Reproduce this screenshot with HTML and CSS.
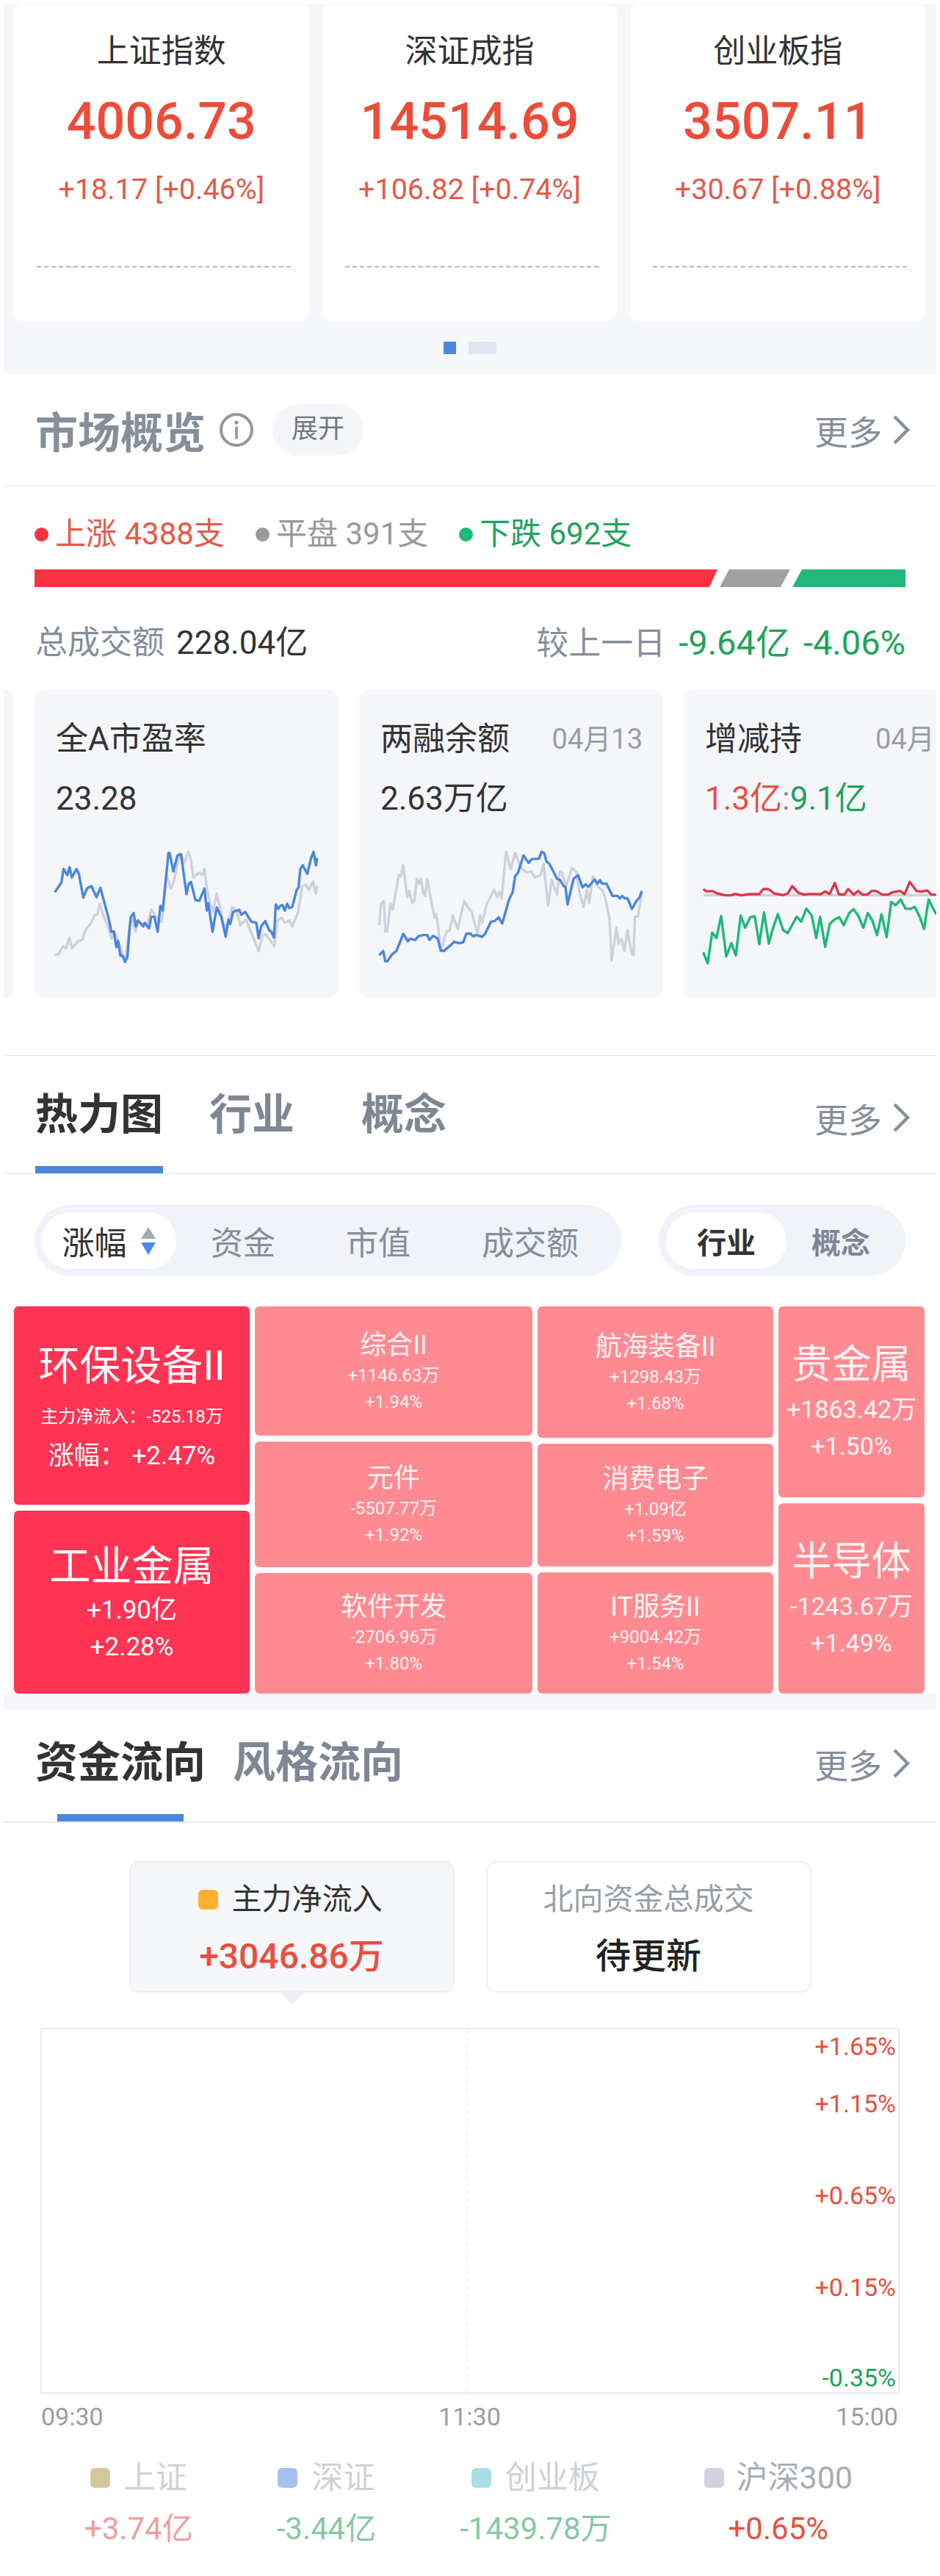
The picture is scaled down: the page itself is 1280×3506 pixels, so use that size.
FILE: index.html
```html
<!DOCTYPE html>
<html lang="zh">
  <head>
    <meta charset="utf-8">
    <title>行情</title>
    <link rel="stylesheet" href="styles.css">
  </head>
  <body>
    <!-- index cards -->
    <section class="indexes">
      <div class="index-row">
        <div class="index-card">
          <div class="index-name">上证指数</div>
          <div class="index-price">4006.73</div>
          <div class="index-change">+18.17 [+0.46%]</div>
          <div class="index-dash"></div>
        </div>
        <div class="index-card">
          <div class="index-name">深证成指</div>
          <div class="index-price">14514.69</div>
          <div class="index-change">+106.82 [+0.74%]</div>
          <div class="index-dash"></div>
        </div>
        <div class="index-card">
          <div class="index-name">创业板指</div>
          <div class="index-price">3507.11</div>
          <div class="index-change">+30.67 [+0.88%]</div>
          <div class="index-dash"></div>
        </div>
      </div>
      <div class="pager">
        <span class="pager-on"></span>
        <span class="pager-off"></span>
      </div>
    </section>

    <!-- market overview -->
    <section class="market">
      <div class="market-head">
        <div class="head-title">市场概览</div>
        <svg class="info-icon" width="46" height="46" viewBox="0 0 46 46">
          <circle cx="23" cy="23" r="21" fill="none" stroke="#92969f" stroke-width="4"/>
          <circle cx="23" cy="13" r="2.6" fill="#92969f"/>
          <path d="M23 20v14" stroke="#92969f" stroke-width="3.6" stroke-linecap="round"/>
        </svg>
        <div class="expand-pill">展开</div>
        <div class="more">更多
          <svg width="24" height="40" viewBox="0 0 24 40"><path d="M3 2l18 18L3 38" fill="none" stroke="#868e9b" stroke-width="4.4"/></svg>
        </div>
      </div>

      <div class="status-row">
        <span class="status up"><i></i>上涨 4388支</span>
        <span class="status flat"><i></i>平盘 391支</span>
        <span class="status down"><i></i>下跌 692支</span>
      </div>
      <div class="ratio-bar">
        <div class="ratio-up"></div>
        <div class="ratio-flat"></div>
        <div class="ratio-down"></div>
      </div>
      <div class="turnover">
        <div><span class="muted">总成交额</span> <span class="dark turn-total">228.04亿</span></div>
        <div class="turn-right"><span class="muted">较上一日</span><span class="green turn-num">-9.64亿</span><span class="green turn-num">-4.06%</span></div>
      </div>

      <div class="mini-row">
        <div class="mini-stub"></div>
        <div class="mini-card">
          <div class="mini-top"><span>全A市盈率</span></div>
          <div class="mini-value">23.28</div>
          <svg class="mini-chart" width="370" height="170" viewBox="171.5 60 906.5 510" preserveAspectRatio="none">
            <polyline class="line-grey" points="183,505 195,505 210,470 220,480 232,435 240,480 260,450 275,445 285,405 305,375 315,345 325,340 333,295 345,345 360,390 372,440 380,410 395,450 410,510 418,530 430,410 437,350 453,410 460,370 490,385 505,320 520,350 540,370 555,180 570,235 580,205 600,90 615,130 628,85 637,120 645,190 665,170 675,180 682,155 690,235 700,290 710,330 723,255 735,320 750,400 762,370 775,310 790,330 802,385 820,360 840,420 863,490 875,430 885,420 900,445 915,470 925,365 940,355 950,375 965,365 975,390 995,330 1008,225 1020,220 1030,240 1045,207 1053,255 1058,225"/>
            <polyline class="line-blue" points="183,250 205,210 212,155 225,180 232,148 240,190 255,155 263,175 278,272 290,235 305,225 322,270 335,232 362,355 372,412 380,410 388,475 394,450 402,510 410,510 417,535 425,515 433,390 437,350 446,335 453,390 460,365 478,390 483,375 497,398 505,350 515,350 526,412 535,305 543,325 562,90 566,90 578,165 592,100 604,95 622,258 630,215 637,208 652,282 665,285 682,235 690,325 695,295 709,412 723,312 738,350 753,432 762,362 768,380 778,330 798,322 805,342 818,330 838,370 855,375 863,438 871,390 885,368 898,405 905,410 914,435 920,300 928,318 936,305 943,303 950,325 958,297 965,315 975,310 990,240 996,230 1002,155 1010,140 1025,175 1038,110 1046,85 1054,140 1058,110"/>
          </svg>
        </div>
        <div class="mini-card">
          <div class="mini-top"><span>两融余额</span><span class="mini-date">04月13</span></div>
          <div class="mini-value">2.63万亿</div>
          <svg class="mini-chart" width="370" height="170" viewBox="1254 60 906.5 510" preserveAspectRatio="none">
            <polyline class="line-grey" points="1265,385 1270,300 1280,285 1285,410 1292,410 1302,295 1310,320 1330,180 1337,185 1345,140 1358,270 1365,245 1375,295 1382,285 1390,195 1398,215 1404,195 1412,255 1418,265 1425,195 1440,300 1450,355 1455,340 1462,400 1470,490 1485,425 1490,410 1500,405 1510,345 1527,400 1548,285 1560,310 1573,330 1583,380 1593,415 1601,345 1608,375 1623,300 1648,240 1658,270 1665,250 1673,275 1688,85 1703,155 1718,90 1738,150 1758,170 1773,165 1783,190 1803,180 1813,135 1828,305 1840,200 1858,260 1866,170 1873,165 1888,225 1908,150 1923,170 1933,250 1946,310 1958,240 1965,295 1978,185 1993,225 2008,240 2018,270 2033,355 2040,530 2056,395 2063,460 2073,440 2083,490 2093,405 2108,505 2113,505 2118,350 2128,350 2141,250"/>
            <polyline class="line-blue" points="1265,507 1278,490 1285,532 1292,532 1308,503 1322,490 1345,420 1360,450 1368,440 1385,445 1395,430 1410,425 1425,425 1432,445 1445,428 1460,440 1470,488 1480,490 1500,470 1515,452 1530,458 1545,455 1555,420 1568,418 1578,430 1588,425 1608,432 1618,420 1638,370 1650,368 1663,352 1675,378 1698,280 1710,250 1718,185 1728,170 1746,100 1763,130 1773,115 1798,113 1806,85 1815,90 1823,125 1833,135 1858,195 1868,200 1880,225 1886,228 1893,300 1913,195 1928,180 1943,230 1953,218 1963,228 1983,198 1993,215 2001,200 2008,215 2023,215 2043,265 2060,265 2068,275 2076,265 2083,275 2093,275 2108,318 2123,285 2133,272 2141,245"/>
          </svg>
        </div>
        <div class="mini-card">
          <div class="mini-top"><span>增减持</span><span class="mini-date mini-date-cut">04月</span></div>
          <div class="mini-value"><span class="red">1.3亿</span><span class="muted">:</span><span class="green">9.1亿</span></div>
          <svg class="mini-chart" width="370" height="170" viewBox="769.3 60 906.5 510" preserveAspectRatio="none">
            <line class="line-grey" x1="778" y1="262" x2="1555" y2="262"/>
            <polyline class="line-red" points="778,238 790,247 808,245 825,255 850,262 870,263 885,257 905,263 930,258 965,258 978,237 995,237 1015,255 1045,262 1060,255 1075,225 1095,252 1115,260 1135,257 1170,258 1185,247 1200,257 1217,212 1230,258 1248,260 1262,237 1280,260 1295,245 1310,260 1325,260 1340,245 1355,245 1375,260 1395,260 1410,250 1435,245 1450,258 1467,208 1490,245 1505,248 1525,243 1540,260 1555,260"/>
            <polyline class="line-green" points="778,495 793,540 808,415 822,437 838,347 855,512 872,458 887,508 903,345 918,395 935,352 950,348 965,462 981,332 997,460 1010,400 1027,340 1045,405 1060,417 1090,350 1105,370 1122,317 1140,345 1155,437 1168,350 1185,473 1200,380 1215,362 1232,352 1247,385 1265,335 1280,320 1295,345 1312,395 1327,335 1342,365 1358,425 1373,340 1390,433 1405,290 1420,303 1437,280 1453,317 1470,318 1484,310 1500,350 1515,400 1530,280 1555,340"/>
          </svg>
        </div>
      </div>
    </section>

    <!-- heat map -->
    <section class="heat">
      <div class="heat-head">
        <div class="tab tab-on">热力图</div>
        <div class="tab tab-a">行业</div>
        <div class="tab tab-b">概念</div>
        <div class="more heat-more">更多
          <svg width="24" height="40" viewBox="0 0 24 40"><path d="M3 2l18 18L3 38" fill="none" stroke="#868e9b" stroke-width="4.4"/></svg>
        </div>
      </div>

      <div class="filter-row">
        <div class="seg seg-left">
          <div class="seg-pill seg-sort">涨幅
            <svg width="22" height="38" viewBox="0 0 22 38">
              <path d="M11 0l10 16H1z" fill="#a6a9b4"/>
              <path d="M1 21h20L11 38z" fill="#4d8af0"/>
            </svg>
          </div>
          <div class="seg-item seg-zj">资金</div>
          <div class="seg-item seg-sz">市值</div>
          <div class="seg-item seg-cj">成交额</div>
        </div>
        <div class="seg seg-right">
          <div class="seg-pill seg-bold">行业</div>
          <div class="seg-other">概念</div>
        </div>
      </div>

      <div class="treemap">
        <div class="tree-col col-a">
          <div class="tile deep tile-a1">
            <div class="t-big">环保设备II</div>
            <div class="t-sub">主力净流入：-525.18万</div>
            <div class="t-line">涨幅： +2.47%</div>
          </div>
          <div class="tile deep tile-a2">
            <div class="t-big">工业金属</div>
            <div class="t-line">+1.90亿</div>
            <div class="t-line">+2.28%</div>
          </div>
        </div>
        <div class="tree-col col-b">
          <div class="tile pale tile-b1">
            <div class="t-mid">综合II</div>
            <div class="t-small">+1146.63万</div>
            <div class="t-small">+1.94%</div>
          </div>
          <div class="tile pale tile-b2">
            <div class="t-mid">元件</div>
            <div class="t-small">-5507.77万</div>
            <div class="t-small">+1.92%</div>
          </div>
          <div class="tile pale tile-b3">
            <div class="t-mid">软件开发</div>
            <div class="t-small">-2706.96万</div>
            <div class="t-small">+1.80%</div>
          </div>
        </div>
        <div class="tree-col col-c">
          <div class="tile pale tile-c1">
            <div class="t-mid">航海装备II</div>
            <div class="t-small">+1298.43万</div>
            <div class="t-small">+1.68%</div>
          </div>
          <div class="tile pale tile-c2">
            <div class="t-mid">消费电子</div>
            <div class="t-small">+1.09亿</div>
            <div class="t-small">+1.59%</div>
          </div>
          <div class="tile pale tile-c3">
            <div class="t-mid">IT服务II</div>
            <div class="t-small">+9004.42万</div>
            <div class="t-small">+1.54%</div>
          </div>
        </div>
        <div class="tree-col col-d">
          <div class="tile pale tile-d1">
            <div class="t-big">贵金属</div>
            <div class="t-line">+1863.42万</div>
            <div class="t-line">+1.50%</div>
          </div>
          <div class="tile pale tile-d2">
            <div class="t-big">半导体</div>
            <div class="t-line">-1243.67万</div>
            <div class="t-line">+1.49%</div>
          </div>
        </div>
      </div>
      <div class="heat-foot"></div>
    </section>

    <!-- money flow -->
    <section class="flow">
      <div class="flow-head">
        <div class="flow-tabs">
          <div class="flow-tab flow-on">资金流向</div>
          <div class="flow-tab">风格流向</div>
          <div class="more flow-more">更多
            <svg width="24" height="40" viewBox="0 0 24 40"><path d="M3 2l18 18L3 38" fill="none" stroke="#868e9b" stroke-width="4.4"/></svg>
          </div>
        </div>
        <div class="flow-line"></div>
      </div>

      <div class="flow-boxes">
        <div class="flow-box box-on">
          <div class="box-label"><i class="sq sq-orange"></i>主力净流入</div>
          <div class="box-value red">+3046.86万</div>
        </div>
        <div class="flow-box">
          <div class="box-label box-grey">北向资金总成交</div>
          <div class="box-value box-wait">待更新</div>
        </div>
      </div>

      <div class="flow-chart">
        <div class="mid-line"></div>
        <div class="axis-y red y1">+1.65%</div>
        <div class="axis-y red y2">+1.15%</div>
        <div class="axis-y red y3">+0.65%</div>
        <div class="axis-y red y4">+0.15%</div>
        <div class="axis-y green y5">-0.35%</div>
      </div>
      <div class="axis-x">
        <span>09:30</span>
        <span>11:30</span>
        <span>15:00</span>
      </div>

      <div class="legend">
        <div class="legend-item">
          <div class="legend-name faded"><i class="sq sq-sh"></i>上证</div>
          <div class="legend-val red-soft">+3.74亿</div>
        </div>
        <div class="legend-item">
          <div class="legend-name faded"><i class="sq sq-sz"></i>深证</div>
          <div class="legend-val green-soft">-3.44亿</div>
        </div>
        <div class="legend-item">
          <div class="legend-name faded"><i class="sq sq-cy"></i>创业板</div>
          <div class="legend-val green-soft">-1439.78万</div>
        </div>
        <div class="legend-item legend-last">
          <div class="legend-name"><i class="sq sq-hs"></i>沪深300</div>
          <div class="legend-val red">+0.65%</div>
        </div>
      </div>
    </section>
  </body>
</html>
```

FILE: styles.css
```css
* {
  box-sizing: border-box;
}

body {
  margin: 0;
  width: 1280px;
  background: #fff;
  color: #333;
  font-family: Roboto, "Noto Sans CJK SC", sans-serif;
}

.red { color: #e8503e; }
.green { color: #1fa35a; }
.muted { color: #868e9b; }
.dark { color: #333; }

/* index cards */
.indexes {
  margin: 5px 5px 0;
  height: 505px;
  background: #f5f7fa;
  overflow: hidden;
}

.index-row {
  display: flex;
  gap: 18px;
  padding: 1px 15px 0 14px;
}

.index-card {
  flex: 1;
  height: 431px;
  padding-top: 34px;
  background: #fff;
  border-radius: 12px;
  text-align: center;
}

.index-name {
  font-size: 44px;
  line-height: 60px;
  color: #333;
}

.index-price {
  margin-top: 25px;
  font-size: 70px;
  line-height: 80px;
  font-weight: 500;
  color: #ee4b38;
}

.index-change {
  margin-top: 28px;
  font-size: 39.5px;
  line-height: 50px;
  color: #e2594a;
}

.index-dash {
  margin: 79px 25px 0 31px;
  border-top: 2px dashed #b9b9b9;
}

.pager {
  display: flex;
  justify-content: center;
  gap: 17px;
  margin-top: 28px;
}

.pager span {
  height: 17px;
}

.pager-on {
  width: 17px;
  background: #4a86e4;
}

.pager-off {
  width: 38px;
  background: #e3e6f1;
}

/* market overview */
.market {
  height: 927px;
  border-bottom: 1px solid #dcdee2;
  margin: 0 5px;
}

.market-head {
  display: flex;
  align-items: center;
  height: 152px;
  padding: 0 36px 2px 43px;
  border-bottom: 1px solid #e8eaee;
}

.head-title {
  font-size: 58px;
  font-weight: 700;
  color: #868e9b;
}

.info-icon {
  margin-left: 19px;
}

.expand-pill {
  margin-left: 26px;
  width: 124px;
  height: 70px;
  line-height: 68px;
  border-radius: 35px;
  background: #f5f6fa;
  text-align: center;
  font-size: 36px;
  color: #73777f;
}

.more {
  display: flex;
  align-items: center;
  gap: 14px;
  margin-left: auto;
  font-size: 46px;
  color: #868e9b;
}

.status-row {
  display: flex;
  margin-top: 40px;
  padding-left: 42px;
  font-size: 42px;
  line-height: 50px;
}

.status {
  display: flex;
  align-items: center;
}

.status i {
  width: 19px;
  height: 19px;
  margin-right: 9px;
  border-radius: 50%;
}

.status.up { width: 301px; color: #e2594a; }
.status.up i { background: #f4333f; }
.status.flat { width: 277px; color: #999; }
.status.flat i { background: #999; }
.status.down { color: #1fa35a; }
.status.down i { background: #1fb878; }

.ratio-bar {
  display: flex;
  gap: 3px;
  height: 24px;
  margin: 23px 42px 0;
}

.ratio-up {
  width: 930px;
  background: #f9323f;
  clip-path: polygon(0 0, 100% 0, calc(100% - 11px) 100%, 0 100%);
}

.ratio-flat {
  width: 96px;
  background: #a0a0a0;
  clip-path: polygon(13px 0, 100% 0, calc(100% - 13px) 100%, 0 100%);
}

.ratio-down {
  flex: 1;
  background: #1fb878;
  clip-path: polygon(13px 0, 100% 0, 100% 100%, 0 100%);
}

.turnover {
  display: flex;
  justify-content: space-between;
  margin-top: 46px;
  padding: 0 42px 0 43px;
  font-size: 44px;
  line-height: 60px;
}

.turn-total {
  margin-left: 5px;
}

.turn-num {
  margin-left: 18px;
  font-size: 47px;
}

.mini-row {
  display: flex;
  gap: 28px;
  margin-top: 33px;
  overflow: hidden;
}

.mini-stub {
  flex: none;
  width: 14px;
  background: #f5f6fa;
  border-radius: 0 12px 12px 0;
}

.mini-card {
  flex: none;
  width: 414px;
  height: 419px;
  padding: 37px 0 0 29px;
  background: #f5f6fa;
  border-radius: 14px;
  overflow: hidden;
}

.mini-top {
  display: flex;
  font-size: 44px;
  line-height: 60px;
  color: #333;
}

.mini-date {
  margin-left: auto;
  padding-right: 28px;
  font-size: 38px;
  color: #999da5;
}

.mini-date-cut {
  padding-right: 0;
  margin-left: 100px;
}

.mini-value {
  margin-top: 21px;
  font-size: 44px;
  line-height: 60px;
  color: #333;
}

.mini-chart {
  display: block;
  margin: 34px 0 0 -6px;
}

.mini-chart polyline,
.mini-chart line {
  fill: none;
  stroke-width: 3.4px;
  stroke-linejoin: round;
  vector-effect: non-scaling-stroke;
}

.line-grey { stroke: #d0d0dc; }
.line-blue { stroke: #4a86dc; }
.line-red { stroke: #d9394a; }
.line-green { stroke: #1fb878; }

/* heat map */
.heat-head {
  display: flex;
  height: 161px;
  margin: 0 5px;
  padding: 40px 0 0 43px;
  border-bottom: 2px solid #eceef1;
}

.tab {
  height: 120px;
  font-size: 58px;
  line-height: 80px;
  font-weight: 700;
  color: #7f8794;
}

.tab-on {
  color: #333;
  border-bottom: 10px solid #4a86dc;
}

.tab-a { margin-left: 63px; }
.tab-b { margin-left: 91px; }

.heat-more {
  height: 80px;
  margin-top: 4px;
  margin-right: 36px;
}

.filter-row {
  display: flex;
  justify-content: space-between;
  margin-top: 42px;
  padding: 0 47px;
}

.seg {
  display: flex;
  align-items: center;
  height: 97px;
  padding: 0 10px;
  background: #f0f3f8;
  border-radius: 49px;
}

.seg-left { width: 799px; }
.seg-right { width: 336px; }

.seg-pill {
  display: flex;
  align-items: center;
  justify-content: center;
  height: 77px;
  background: #fff;
  border-radius: 39px;
  color: #333;
}

.seg-sort {
  width: 183px;
  gap: 18px;
  font-size: 44px;
}

.seg-item {
  font-size: 44px;
  color: #868e9b;
}

.seg-zj { margin-left: 47px; }
.seg-sz { margin-left: 96px; }
.seg-cj { margin-left: 97px; }

.seg-bold {
  width: 164px;
  font-size: 40px;
  font-weight: 700;
}

.seg-other {
  margin-left: 34px;
  font-size: 40px;
  font-weight: 700;
  color: #7f8794;
}

.treemap {
  display: flex;
  gap: 7px;
  height: 527px;
  margin-top: 41px;
  padding: 0 20px 0 19px;
}

.tree-col {
  display: flex;
  flex-direction: column;
  gap: 8px;
}

.col-a { width: 321px; }
.col-b { width: 378px; }
.col-c { width: 321px; }
.col-d { width: 199px; }

.tile {
  display: flex;
  flex-direction: column;
  justify-content: center;
  align-items: center;
  border-radius: 6px;
  color: #fff;
  white-space: nowrap;
}

.deep { background: #ff3353; }
.pale { background: #ff8a92; color: #fff3f3; }

.tile-a1 { height: 270px; padding-top: 4px; }
.tile-a2 { height: 249px; padding-top: 2px; }
.tile-b1 { height: 176px; padding-top: 2px; }
.tile-b2 { height: 171px; }
.tile-b3 { height: 164px; }
.tile-c1 { height: 179px; padding-top: 2px; }
.tile-c2 { height: 167px; }
.tile-c3 { height: 165px; }
.tile-d1 { height: 260px; }
.tile-d2 { height: 259px; }

.t-big {
  font-size: 56px;
  line-height: 70px;
}

.col-d .t-big {
  font-size: 54px;
}

.t-sub {
  margin-top: 16px;
  font-size: 24px;
  line-height: 36px;
}

.t-line {
  font-size: 35px;
  line-height: 50px;
}

.col-d .t-line {
  font-size: 34px;
}

.t-sub + .t-line {
  margin-top: 11px;
}

.t-mid {
  font-size: 36px;
  line-height: 46px;
}

.t-small {
  font-size: 24px;
  line-height: 36px;
}

.heat-foot {
  height: 22px;
  margin: 0 5px;
  background: #f5f7fa;
}

/* money flow */
.flow-tabs {
  display: flex;
  padding: 32px 0 0 48px;
}

.flow-tab {
  font-size: 58px;
  line-height: 80px;
  font-weight: 700;
  color: #7f8794;
}

.flow-on {
  margin-right: 37px;
  color: #333;
}

.flow-more {
  height: 74px;
  margin-top: 4px;
  margin-right: 41px;
}

.flow-line {
  position: relative;
  height: 12px;
  margin: 30px 5px 0;
  border-bottom: 2px solid #e8eaee;
}

.flow-line::after {
  content: "";
  position: absolute;
  left: 73px;
  top: 0;
  width: 172px;
  height: 10px;
  background: #4a86dc;
}

.flow-boxes {
  display: flex;
  justify-content: center;
  gap: 43px;
  margin-top: 52px;
}

.flow-box {
  position: relative;
  width: 443px;
  height: 179px;
  padding-top: 25px;
  border: 2px solid #eceef2;
  border-radius: 14px;
  text-align: center;
}

.box-on {
  background: #f5f7fa;
}

.box-on::after {
  content: "";
  position: absolute;
  left: 203px;
  bottom: -19px;
  width: 0;
  height: 0;
  border-left: 17px solid transparent;
  border-right: 17px solid transparent;
  border-top: 18px solid #eef0f4;
}

.box-label {
  display: flex;
  justify-content: center;
  align-items: center;
  font-size: 41px;
  line-height: 50px;
  color: #333;
}

.box-on .box-label {
  padding-right: 4px;
}

.box-grey {
  color: #999ea8;
}

.box-value {
  margin-top: 23px;
  font-size: 48px;
  line-height: 60px;
  font-weight: 500;
}

.box-wait {
  color: #222;
}

.sq {
  display: inline-block;
  width: 27px;
  height: 27px;
  margin-right: 19px;
  border-radius: 6px;
}

.sq-orange { background: #ffb030; }
.sq-sh { background: #d6c79a; }
.sq-sz { background: #a5c0f0; }
.sq-cy { background: #a8dfe5; }
.sq-hs { background: #d0d2e0; margin-right: 17px; }

.flow-chart {
  position: relative;
  width: 1170px;
  height: 498px;
  margin: 48px 0 0 55px;
  border: 2px solid #e8ebef;
}

.mid-line {
  position: absolute;
  left: 578px;
  top: 0;
  bottom: 0;
  border-left: 2px dashed #eff0f3;
}

.axis-y {
  position: absolute;
  right: 3px;
  font-size: 34px;
  line-height: 40px;
}

.y1 { top: 3px; }
.y2 { top: 81px; }
.y3 { top: 206px; }
.y4 { top: 331px; }
.y5 { top: 454px; }

.axis-x {
  display: flex;
  justify-content: space-between;
  margin-top: 11px;
  padding: 0 57px 0 56px;
  font-size: 34px;
  line-height: 40px;
  color: #999da5;
}

.legend {
  display: flex;
  justify-content: center;
  gap: 114px;
  margin-top: 38px;
  padding-right: 4px;
}

.legend-item {
  text-align: center;
}

.legend-last {
  margin-left: 12px;
}

.legend-name {
  display: flex;
  justify-content: center;
  align-items: center;
  font-size: 43px;
  line-height: 50px;
  color: #a8acb5;
}

.legend-name.faded {
  color: #cfd1d6;
}

.legend-val {
  margin-top: 20px;
  font-size: 42px;
  line-height: 50px;
}

.red-soft { color: #ee9f98; }
.green-soft { color: #86c9a2; }
```
